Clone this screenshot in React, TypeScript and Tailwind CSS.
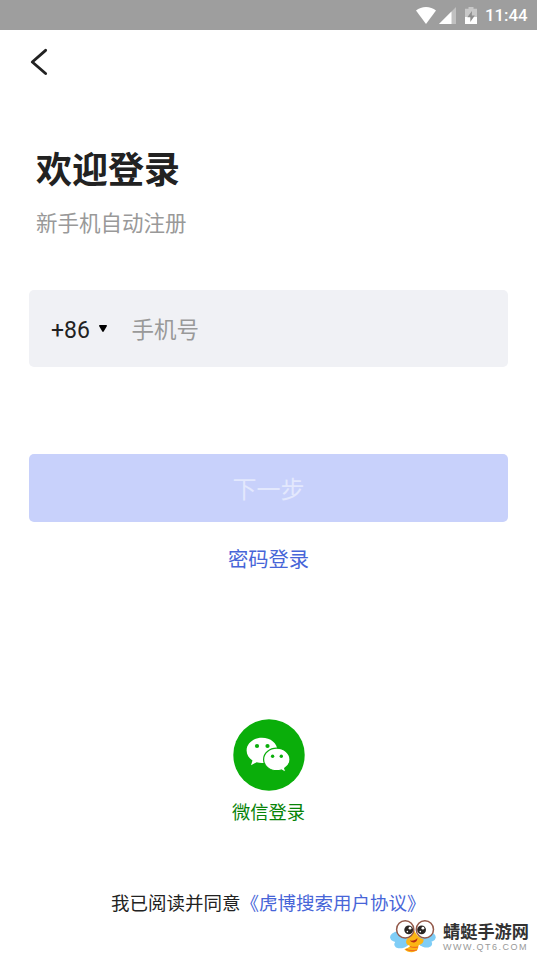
import type { ReactNode } from "react";

function StatusBar() {
  return (
    <div className="flex h-[30px] shrink-0 items-center justify-end bg-[#9e9e9e] pr-[10px] text-white">
      <svg className="h-[17px] w-[20px]" viewBox="0 0 20 17" fill="currentColor">
        <path d="M0 3.6C2.8 1.2 6.2 0 10 0s7.200 1.200 10 3.600L10 17z" />
      </svg>
      <svg className="ml-[3px] h-[17px] w-[17px]" viewBox="0 0 17 17" fill="currentColor">
        <path d="M17 0v17H0z" fillOpacity="0.35" />
        <path d="M12.500 4.500V17H0z" />
      </svg>
      <svg className="ml-[9px] h-[17px] w-[12px]" viewBox="0 0 12 17">
        <path d="M3.500 0h5v1.800H12V10H0V1.800h3.500z" fill="#c8c8c8" />
        <path d="M0 10h12v7H0z" fill="#fff" />
        <path d="M7 4L2.300 10.200h3V15L9.800 8.500h-3z" fill="#8f8f8f" />
      </svg>
      <span className="ml-[8px] w-[42px] font-['Roboto',sans-serif] text-[16.800px] leading-[30px] font-medium">
        11:44
      </span>
    </div>
  );
}

function WechatIcon() {
  return (
    <svg className="h-[72px] w-[72px]" viewBox="0 0 72 72">
      <circle cx="36" cy="36" r="35.700" fill="#0aae0a" />
      <path
        d="M29 18.800c-8.600 0-15.400 5.600-15.400 12.600 0 4.100 2.300 7.600 5.900 10l-1.500 4.800 5.600-2.900c1.700.5 3.500.8 5.400.8 8.600 0 15.400-5.600 15.400-12.700S37.600 18.800 29 18.800z"
        fill="#fff"
      />
      <circle cx="24" cy="27" r="2.100" fill="#0aae0a" />
      <circle cx="34.500" cy="27" r="2.100" fill="#0aae0a" />
      <path
        d="M43.800 29.200c-7.400 0-13.200 5-13.200 11.200s5.800 11.300 13.200 11.300c1.600 0 3.100-.3 4.500-.7l4.600 2.500-1.200-4.200c3.200-2 5.300-5.200 5.300-8.900 0-6.200-5.900-11.200-13.200-11.200z"
        fill="#fff"
        stroke="#0aae0a"
        strokeWidth="1.200"
      />
      <circle cx="39.600" cy="37.300" r="1.700" fill="#0aae0a" />
      <circle cx="48.300" cy="37.300" r="1.700" fill="#0aae0a" />
    </svg>
  );
}

function DragonflyLogo() {
  return (
    <svg className="h-[34px] w-[46px] shrink-0" viewBox="0 0 46 34">
      <g fill="#7fcdf6">
        <ellipse cx="9" cy="16.500" rx="9" ry="5.600" transform="rotate(-8 9 16.500)" />
        <ellipse cx="12.500" cy="22.500" rx="8.500" ry="5.300" transform="rotate(-22 12.500 22.500)" />
        <ellipse cx="37" cy="16.500" rx="8.800" ry="5.600" transform="rotate(8 37 16.500)" />
        <ellipse cx="34.500" cy="22" rx="8" ry="5" transform="rotate(22 34.500 22)" />
      </g>
      <path
        d="M24 10c-1.500 4.500-6.800 7-7.800 11-.6 3 2 4.500 4.200 4.800-.8 1.700-3.700 2.500-6 3.400 3 3.800 10.600 3.800 13 .6 1.200-1.800.5-3.300 1.500-4.800 3.200-.8 5-3 4.700-5.800-3.400-.8-6.800-3.600-9.600-9.200z"
        fill="#fcb514"
      />
      <path d="M20 26.500c2.500 1.200 5 1.300 8 .4M16 29.300c3 1.500 7 1.700 11 .7" stroke="#f0701c" strokeWidth="1.200" fill="none" />
      <path d="M20 20.500c2.900.5 5.500-.3 7.300-2.500.5 3.800-4.100 6.500-7.300 2.500z" fill="#b92c12" />
      <g fill="#fff" stroke="#93594a" strokeWidth="1.500">
        <circle cx="15.200" cy="9.400" r="8.600" />
        <circle cx="34.900" cy="9.400" r="8.600" />
      </g>
      <g fill="#292522">
        <circle cx="18.700" cy="9.800" r="4.400" />
        <circle cx="31.600" cy="9.800" r="4.400" />
      </g>
      <g fill="#fff">
        <circle cx="20" cy="8.200" r="1.400" />
        <circle cx="32.900" cy="8.200" r="1.400" />
        <circle cx="17.400" cy="11.600" r="0.800" />
        <circle cx="30.300" cy="11.600" r="0.800" />
      </g>
    </svg>
  );
}

function TextLink({ children }: { children: ReactNode }) {
  return (
    <button className="mt-[26px] block w-full text-center text-[20.300px] leading-[20px] text-[#4765d8]">
      {children}
    </button>
  );
}

export default function App() {
  return (
    <div className="relative flex h-[956px] w-[537px] flex-col overflow-hidden bg-white font-['Noto_Sans_CJK_SC',sans-serif] text-[#222]">
      <StatusBar />

      {/* Back */}
      <header className="flex h-[63px] shrink-0 items-center pl-[30px]">
        <svg className="h-[28px] w-[18px]" viewBox="0 0 18 28" fill="none" stroke="#222" strokeWidth="2.900" strokeLinecap="round" strokeLinejoin="round">
          <path d="M15.600 2.300L2.300 14l13.300 11.500" />
        </svg>
      </header>

      <main className="px-[29px] pt-[56px]">
        <div className="pl-[7px]">
          <h1 className="text-[36px] leading-[36px] font-bold">欢迎登录</h1>
          <p className="mt-[26px] text-[21.500px] leading-[22px] text-[#999]">
            新手机自动注册
          </p>
        </div>

        {/* Phone number */}
        <div className="mt-[57px] flex h-[77px] items-center rounded-[5px] bg-[#f0f1f5] pl-[22px]">
          <span className="mt-[4px] font-['Roboto',sans-serif] text-[23px] leading-[24px]">+86</span>
          <svg className="ml-[9px] h-[7px] w-[8px]" viewBox="0 0 8 7">
            <path d="M.8 0h6.400c.7 0 1 .6.6 1.200L4.700 6.500c-.4.600-1 .6-1.400 0L.2 1.200C-.2.600.1 0 .8 0z" />
          </svg>
          <input
            type="tel"
            placeholder="手机号"
            className="mb-px ml-[24.500px] h-[30px] w-[300px] bg-transparent text-[22.500px] leading-[30px] outline-none placeholder:text-[#999]"
          />
        </div>

        <button className="mt-[87px] flex h-[68px] w-full items-center justify-center rounded-[5px] bg-[#c8d1fb] text-[24px] leading-[24px] text-[#e3e8fd]">
          下一步
        </button>
        <TextLink>密码登录</TextLink>
      </main>

      {/* Third-party login */}
      <section className="mt-[151px] flex flex-col items-center text-[#078307]">
        <WechatIcon />
        <span className="mt-[11px] text-[18.300px] leading-[18px]">微信登录</span>
      </section>

      <p className="mt-[72px] pl-[111px] text-[18.500px] leading-[20px] whitespace-nowrap">
        我已阅读并同意<span className="text-[#4765d8]">《虎博搜索用户协议》</span>
      </p>

      {/* Site badge over the page corner */}
      <div className="absolute top-[920px] left-[390px] flex">
        <DragonflyLogo />
        <div className="ml-[7px] whitespace-nowrap">
          <p className="mt-[2px] text-[17.200px] leading-[18px] font-bold text-[#333]">蜻蜓手游网</p>
          <p className="mt-[2px] font-['Liberation_Sans',sans-serif] text-[9px] leading-[10px] tracking-[1.500px] text-[#999]">
            WWW.QT6.COM
          </p>
        </div>
      </div>
    </div>
  );
}
